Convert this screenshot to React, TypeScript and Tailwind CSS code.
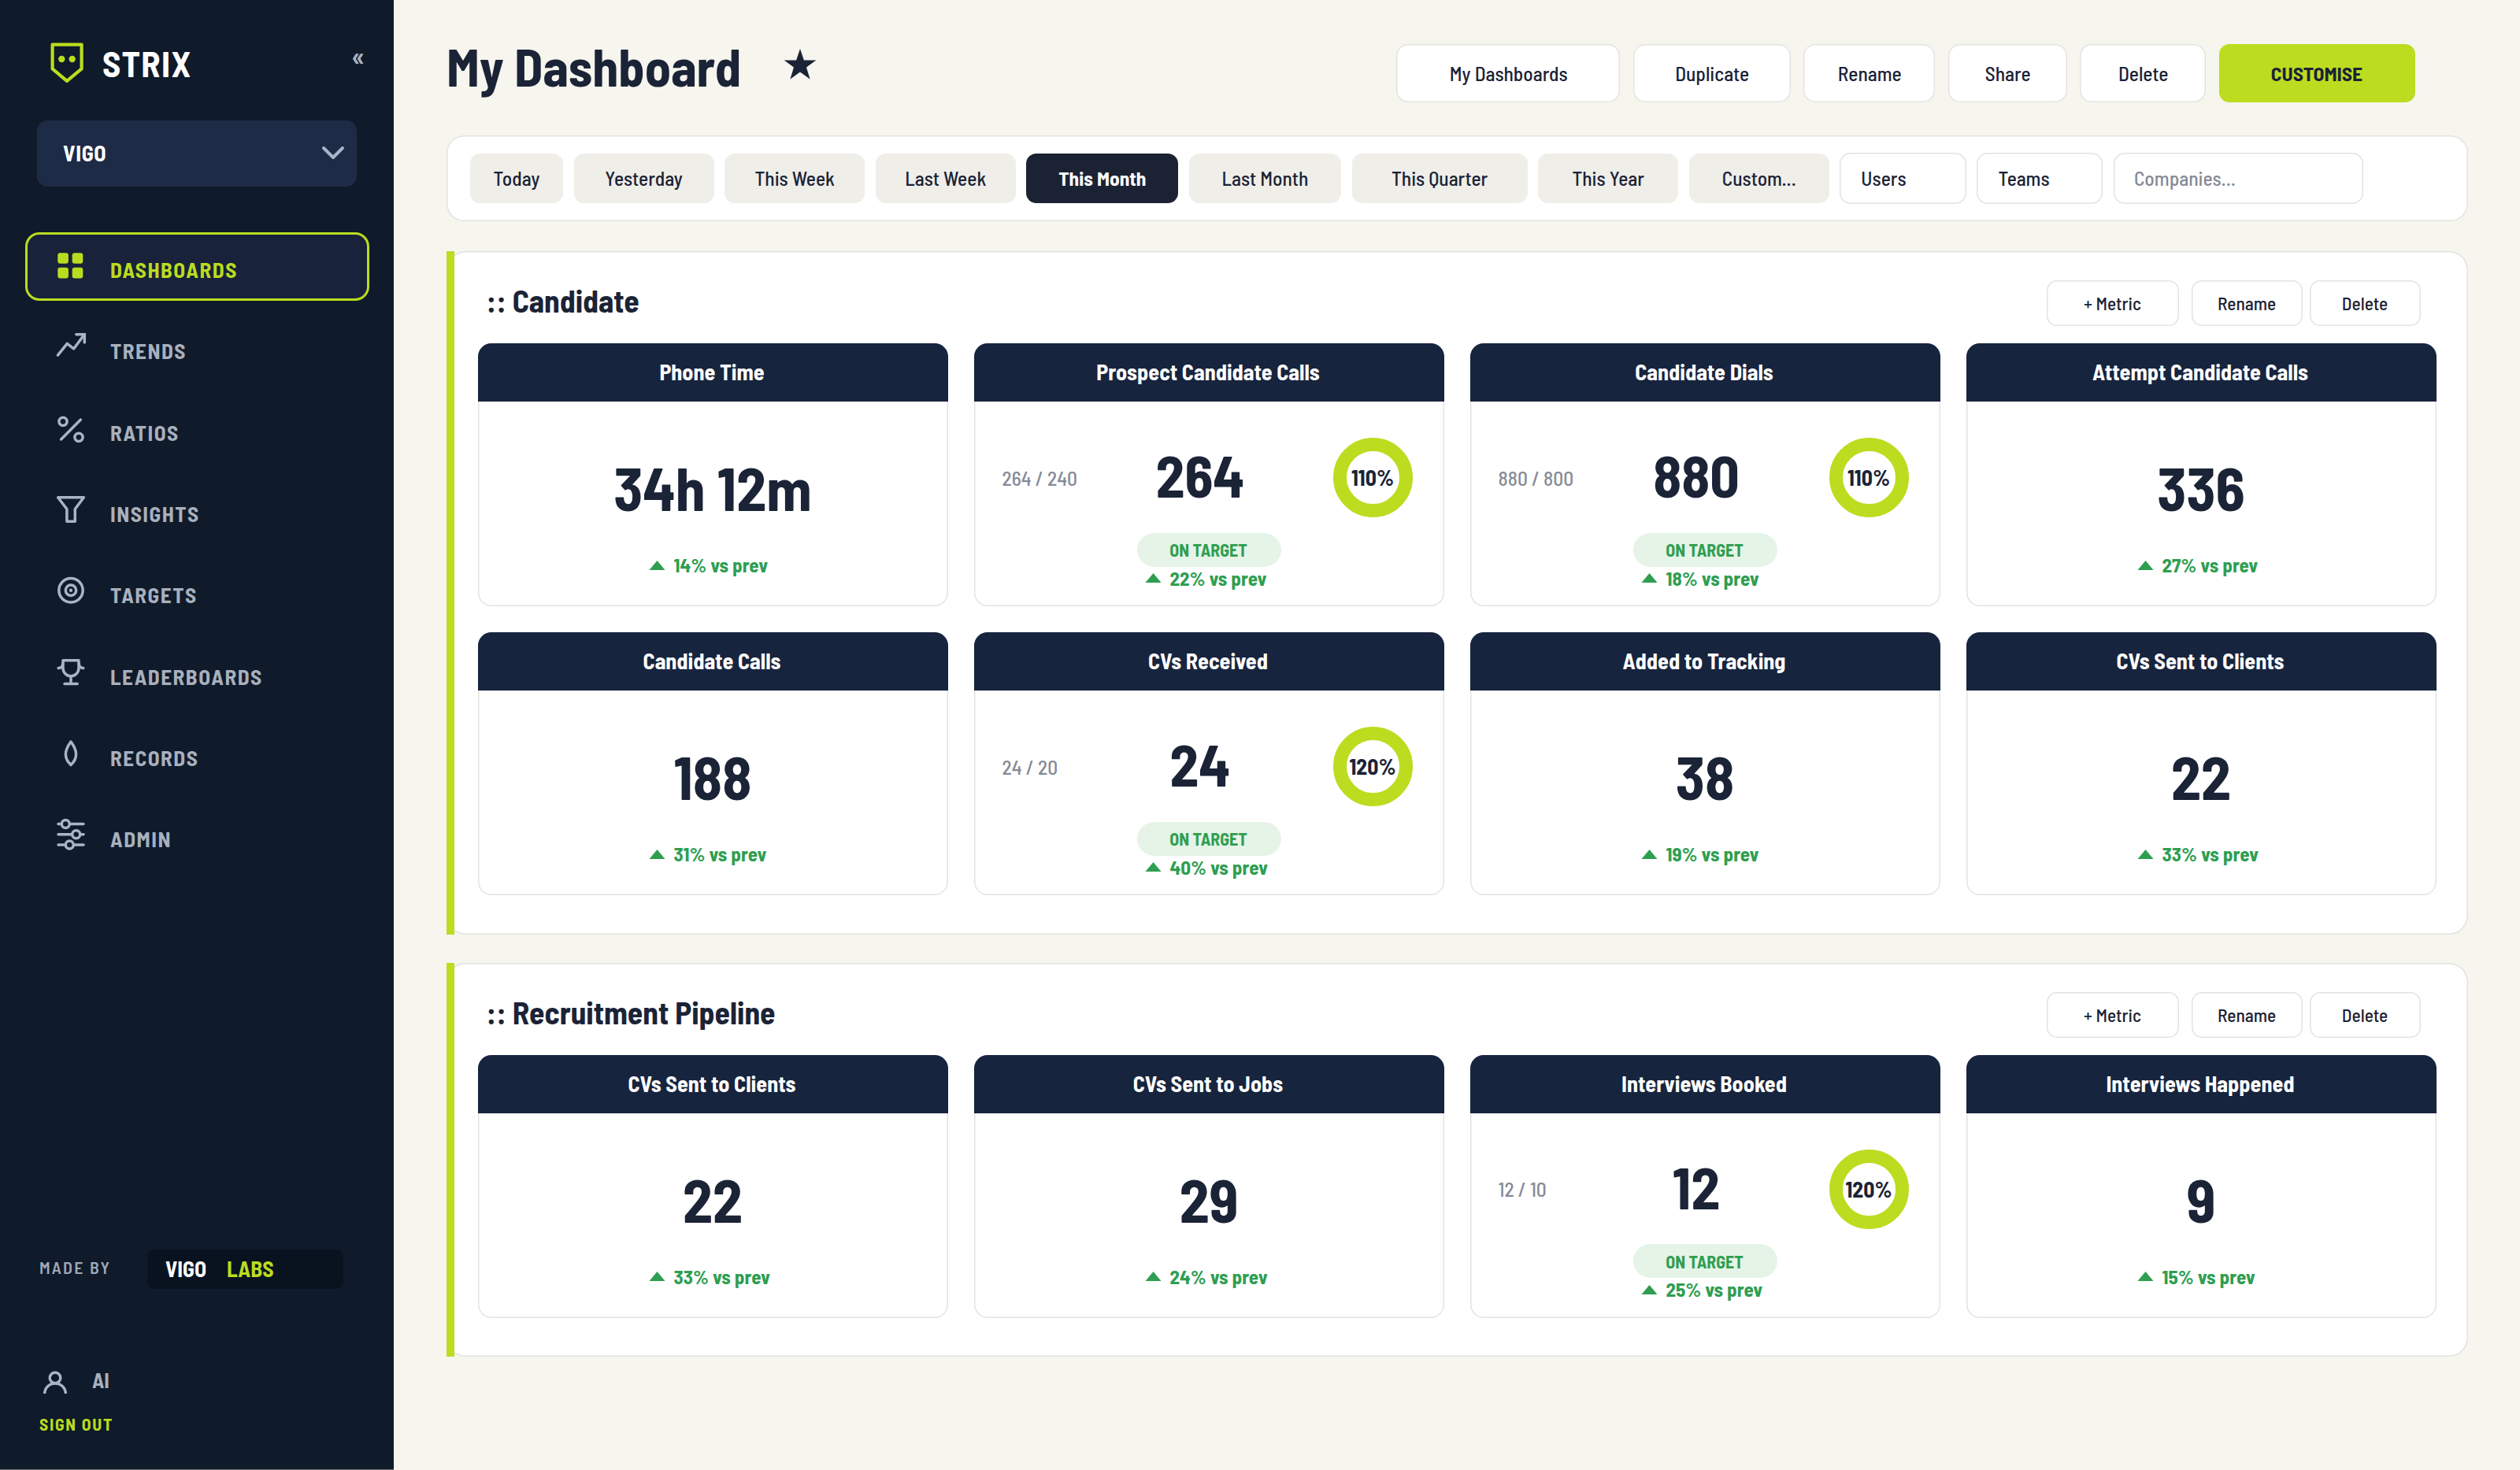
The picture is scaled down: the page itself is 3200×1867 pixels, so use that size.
import type { ReactNode } from 'react';

type Metric = {
  title: string;
  value: string;
  delta: string;
  goal?: string;
  pct?: string;
};

const candidate: Metric[] = [
  { title: 'Phone Time', value: '34h 12m', delta: '14%' },
  { title: 'Prospect Candidate Calls', value: '264', delta: '22%', goal: '264 / 240', pct: '110%' },
  { title: 'Candidate Dials', value: '880', delta: '18%', goal: '880 / 800', pct: '110%' },
  { title: 'Attempt Candidate Calls', value: '336', delta: '27%' },
  { title: 'Candidate Calls', value: '188', delta: '31%' },
  { title: 'CVs Received', value: '24', delta: '40%', goal: '24 / 20', pct: '120%' },
  { title: 'Added to Tracking', value: '38', delta: '19%' },
  { title: 'CVs Sent to Clients', value: '22', delta: '33%' },
];

const pipeline: Metric[] = [
  { title: 'CVs Sent to Clients', value: '22', delta: '33%' },
  { title: 'CVs Sent to Jobs', value: '29', delta: '24%' },
  { title: 'Interviews Booked', value: '12', delta: '25%', goal: '12 / 10', pct: '120%' },
  { title: 'Interviews Happened', value: '9', delta: '15%' },
];

const ranges = [
  { label: 'Today', width: 'w-[118px]' },
  { label: 'Yesterday', width: 'w-[178px]' },
  { label: 'This Week', width: 'w-[178px]' },
  { label: 'Last Week', width: 'w-[178px]' },
  { label: 'This Month', width: 'w-[193px]', active: true },
  { label: 'Last Month', width: 'w-[193px]' },
  { label: 'This Quarter', width: 'w-[223px]' },
  { label: 'This Year', width: 'w-[178px]' },
  { label: 'Custom...', width: 'w-[178px]' },
];

const actions = [
  { label: 'My Dashboards', width: 'w-[284px]' },
  { label: 'Duplicate', width: 'w-[200px]' },
  { label: 'Rename', width: 'w-[167px]' },
  { label: 'Share', width: 'w-[151px]' },
  { label: 'Delete', width: 'w-[160px]' },
];

const nav: { label: string; icon: ReactNode }[] = [
  {
    label: 'DASHBOARDS',
    icon: (
      <g fill="currentColor" stroke="none">
        <rect x="8.3" y="9.2" width="13.6" height="13.6" rx="3" />
        <rect x="26.7" y="9.2" width="13.6" height="13.6" rx="3" />
        <rect x="8.3" y="27.8" width="13.6" height="13.6" rx="3" />
        <rect x="26.7" y="27.8" width="13.6" height="13.6" rx="3" />
      </g>
    ),
  },
  {
    label: 'TRENDS',
    icon: (
      <>
        <path d="M8.4 36.2 20.3 21.4 28.6 28 42 10" strokeLinejoin="round" />
        <path d="M31.8 9.7H42.3V20" strokeLinejoin="miter" />
      </>
    ),
  },
  {
    label: 'RATIOS',
    icon: (
      <>
        <circle cx="15" cy="16.3" r="5.1" />
        <circle cx="35" cy="36.3" r="5.1" />
        <path d="M12.6 39 37.4 14" />
      </>
    ),
  },
  { label: 'INSIGHTS', icon: <path d="M8.6 9.8H41.4L30.3 24.5V40.2H19.9V24.5Z" /> },
  {
    label: 'TARGETS',
    icon: (
      <>
        <circle cx="25" cy="24.7" r="15.2" />
        <circle cx="25" cy="24.7" r="6.7" />
        <circle cx="25" cy="24.7" r="2.2" fill="currentColor" stroke="none" />
      </>
    ),
  },
  {
    label: 'LEADERBOARDS',
    icon: (
      <>
        <path d="M15 9.8H35V19.5a10 10.2 0 0 1-20 0Z" />
        <path d="M14.8 13.5C14.6 17.6 12.4 19.5 9.2 19.6M35.2 13.5C35.4 17.6 37.6 19.5 40.8 19.6" />
        <path d="M25 30V37M17 39.6H33.2" />
      </>
    ),
  },
  {
    label: 'RECORDS',
    icon: <path d="M25 10C20.6 16 18.4 21.2 18.4 26C18.4 31 20.8 35.6 25 39.6C29.2 35.6 31.6 31 31.6 26C31.6 21.2 29.4 16 25 10Z" />,
  },
  {
    label: 'ADMIN',
    icon: (
      <>
        <path d="M9 11.4H41M9 24.7H41M9 38H41" />
        <g fill="#0f1a2a">
          <circle cx="18.3" cy="11.4" r="5" />
          <circle cx="31.7" cy="24.7" r="5" />
          <circle cx="23.3" cy="38" r="5" />
        </g>
      </>
    ),
  },
];

function Sidebar() {
  return (
    <aside className="w-[500px] h-[1867px] shrink-0 bg-[#0f1a2a] border-b border-[#6f757c] flex flex-col">
      {/* Logo */}
      <div className="flex items-start pt-[50px] pl-[60px] h-[153px]">
        <svg width="50" height="60" viewBox="0 0 50 60" fill="none" stroke="#badc1f" strokeWidth="4.2" strokeLinejoin="round">
          <path d="M6.6 6.6H43.6V37.4L25 52.8 6.6 37.4Z" />
          <circle cx="18.3" cy="25" r="4.2" fill="#badc1f" stroke="none" />
          <circle cx="31.7" cy="25" r="4.2" fill="#badc1f" stroke="none" />
        </svg>
        <span className="ml-[20px] w-[316px] h-[60px] leading-[60px] text-[44.8px] font-bold tracking-[1.4px] text-white">STRIX</span>
        <span className="text-[36px] leading-[48px] h-12 -mt-[3px] font-semibold text-[#a9b2c1]">«</span>
      </div>

      {/* Workspace select */}
      <div className="mx-[47px] h-[84px] rounded-[13px] bg-[#1d2b46] flex items-center justify-between pl-[33px] pr-[15px]">
        <span className="text-[28px] leading-[40px] pb-[3px] font-bold tracking-[0.6px] text-white">VIGO</span>
        <svg width="32" height="20" viewBox="0 0 32 20" fill="none" stroke="#a9b4c6" strokeWidth="4" strokeLinecap="round" strokeLinejoin="round">
          <path d="M5 3 17 15 29 3" />
        </svg>
      </div>

      {/* Nav */}
      <nav className="mt-[58px] ml-8 mr-[31px] flex flex-col gap-4">
        {nav.map((item, i) => (
          <a
            key={item.label}
            className={`h-[87.33px] flex items-center pl-[33px] rounded-[18px] ${
              i === 0 ? 'bg-[#18223a] text-[#badc1f] shadow-[inset_0_0_0_3px_#badc1f]' : 'text-[#a9b4c6]'
            }`}
          >
            <svg
              className="-mt-[3px]"
              width="50"
              height="50"
              viewBox="0 0 50 50"
              fill="none"
              stroke="currentColor"
              strokeWidth="3.5"
              strokeLinecap="round"
              strokeLinejoin="round"
            >
              {item.icon}
            </svg>
            <span className={`ml-[25px] pt-[7px] text-[27.2px] leading-[40px] font-bold tracking-[1.5px] ${i === 0 ? '' : 'text-[#a8b0be]'}`}>{item.label}</span>
          </a>
        ))}
      </nav>

      {/* Footer */}
      <div className="mt-auto">
        <div className="flex items-center pl-[50px]">
          <span className="w-[137px] pb-[6px] text-[21.8px] leading-[30px] font-semibold tracking-[2.2px] text-[#a0a8b6]">MADE BY</span>
          <div className="w-[249px] h-[50px] rounded-[9px] bg-[#09131f] flex items-center pl-[23px] pb-[2px] text-[27.6px] leading-[40px] font-bold">
            <span className="w-[78px] text-white">VIGO</span>
            <span className="text-[#badc1f]">LABS</span>
          </div>
        </div>
        <div className="mt-[96px] flex items-start pl-[50px]">
          <svg width="40" height="44" viewBox="0 0 40 44" fill="none" stroke="#a9b4c6" strokeWidth="3.4">
            <circle cx="20" cy="17" r="6.8" />
            <path d="M6.7 37a13.3 13 0 0 1 26.6 0" />
          </svg>
          <span className="ml-[27px] -mt-[1px] text-[26.6px] leading-[40px] font-bold text-[#a8b0be]">AI</span>
        </div>
        <div className="mt-[16px] pl-[50px] h-[73px] text-[21.6px] leading-[30px] font-bold tracking-[1.7px] text-[#badc1f]">SIGN OUT</div>
      </div>
    </aside>
  );
}

function Delta({ value }: { value: string }) {
  return (
    <div className="h-[30px] flex items-center pl-[217px] text-[#2f9e51]">
      <svg className="mt-[1px]" width="21" height="12" viewBox="0 0 21 12" fill="currentColor">
        <path d="M10.5 0 20.5 12H.5Z" />
      </svg>
      <span className="ml-[11px] text-[25.1px] leading-[30px] font-bold whitespace-nowrap">{value} vs prev</span>
    </div>
  );
}

function MetricCard({ metric }: { metric: Metric }) {
  return (
    <div className="h-[334px] rounded-[17px] overflow-hidden shadow-[inset_0_0_0_1.5px_#e3e3e0]">
      <div className="h-[74px] bg-[#17243e] flex items-center justify-center text-[28.2px] leading-[40px] pb-[2px] pr-[2px] font-bold text-white">
        {metric.title}
      </div>
      {metric.goal ? (
        <>
          <div className="mt-[46px] h-[101px] flex items-center pl-[36px]">
            <span className="w-[151px] text-[25.5px] leading-[30px] font-medium text-[#858b97]">{metric.goal}</span>
            <span className="w-[201px] pb-[7px] text-center text-[73.6px] leading-[80px] font-bold">{metric.value}</span>
            <div className="ml-[68px] size-[101px] rounded-full border-[17.5px] border-[#bcdc20] flex items-center justify-center">
              <span className="pb-[1px] text-[27.8px] leading-[30px] font-bold">{metric.pct}</span>
            </div>
          </div>
          <div className="mt-[19.5px] mx-auto w-[183px] h-[43px] pr-[1px] rounded-full bg-[#e6f4e7] flex items-center justify-center text-[21.9px] leading-[30px] font-bold text-[#2f9e51]">
            ON TARGET
          </div>
          <div className="-mt-[1px]">
            <Delta value={metric.delta} />
          </div>
        </>
      ) : (
        <>
          <div className="mt-[69px] h-[80px] text-center text-[76.2px] leading-[80px] font-bold">{metric.value}</div>
          <div className="mt-[43px]">
            <Delta value={metric.delta} />
          </div>
        </>
      )}
    </div>
  );
}

function Section({ title, metrics }: { title: string; metrics: Metric[] }) {
  const button = 'h-[58px] rounded-[13px] bg-white shadow-[inset_0_0_0_1.5px_#e3e3e0] text-[23.3px] leading-[30px] font-medium';
  return (
    <section className="relative w-[2566.5px] rounded-[24px] bg-white shadow-[inset_0_0_0_1.5px_#e2e2de] pl-[39.5px] pr-[40px] pb-[49.5px]">
      <div className="absolute left-0 top-0 bottom-0 w-[10px] bg-[#bcdc20]" />
      <div className="h-[117px] flex items-start pl-[11px] pr-[20px] pt-[37px]">
        <h2 className="mr-auto mt-[-3px] text-[39.6px] leading-[56px] font-bold">{title}</h2>
        <button className={`${button} w-[168px]`}>+ Metric</button>
        <button className={`${button} w-[141px] ml-[16px]`}>Rename</button>
        <button className={`${button} w-[141px] ml-[9px]`}>Delete</button>
      </div>
      <div className="grid grid-cols-4 gap-[33px]">
        {metrics.map((m) => (
          <MetricCard key={m.title} metric={m} />
        ))}
      </div>
    </section>
  );
}

export default function App() {
  return (
    <div className="w-[3200px] h-[1867px] overflow-hidden flex bg-[#f6f5ee] text-[#1b2336] font-['Barlow_Semi_Condensed','Roboto_Condensed',sans-serif]">
      <Sidebar />
      <main className="pl-[67px] pt-[56px] flex flex-col items-start">
        {/* Page header */}
        <div className="w-[2499.5px] h-[74px] flex">
          <h1 className="mt-[-13px] text-[66.5px] leading-[80px] font-bold">My Dashboard</h1>
          <svg className="ml-[54px] mt-[5px]" width="42" height="42" viewBox="0 0 42 42" fill="#1b2336">
            <path d="M21 1 25.9 15.4H41.3L29 24.6 33.6 39.6 21 30.6 8.4 39.6 13 24.6 .7 15.4H16.1Z" />
          </svg>
          <div className="ml-auto flex gap-[16.5px]">
            {actions.map((a) => (
              <button
                key={a.label}
                className={`${a.width} h-full pl-[1.5px] rounded-[15px] bg-white shadow-[inset_0_0_0_1.5px_#e3e3df] text-[25.4px] leading-[30px] font-medium`}
              >
                {a.label}
              </button>
            ))}
            <button className="w-[249px] h-full rounded-[13px] bg-[#bcdc20] text-[25.5px] leading-[30px] font-bold">CUSTOMISE</button>
          </div>
        </div>

        {/* Filters */}
        <div className="mt-[42px] w-[2566.5px] h-[108.5px] rounded-[22px] bg-white shadow-[inset_0_0_0_1.5px_#e2e2de] flex items-center gap-[13.6px] pl-[30px] text-[25.4px] leading-[30px] font-medium">
          {ranges.map((r) => (
            <button
              key={r.label}
              className={`${r.width} h-[63px] rounded-[13px] ${r.active ? 'bg-[#1b2233] text-white font-bold' : 'bg-[#efeee9]'}`}
            >
              {r.label}
            </button>
          ))}
          <div className="w-[160.5px] h-[65px] rounded-[14px] shadow-[inset_0_0_0_1.5px_#e3e3df] pl-[27px] flex items-center">Users</div>
          <div className="w-[160px] h-[65px] rounded-[14px] shadow-[inset_0_0_0_1.5px_#e3e3df] pl-[27px] flex items-center">Teams</div>
          <div className="w-[317px] h-[65px] rounded-[14px] shadow-[inset_0_0_0_1.5px_#e3e3df] pl-[26px] flex items-center text-[#858b97]">Companies...</div>
        </div>

        <div className="mt-[38.5px] flex flex-col gap-[36px]">
          <Section title=":: Candidate" metrics={candidate} />
          <Section title=":: Recruitment Pipeline" metrics={pipeline} />
        </div>
      </main>
    </div>
  );
}
